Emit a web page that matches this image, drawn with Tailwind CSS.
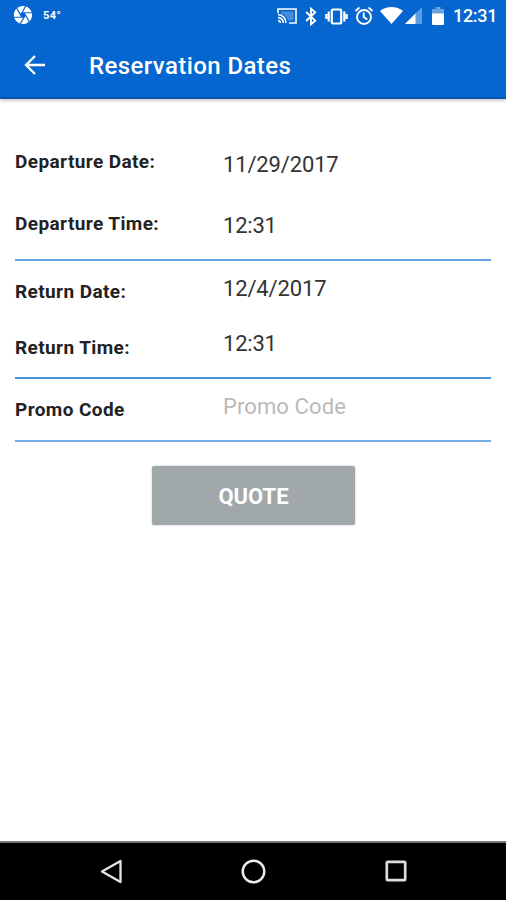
<!DOCTYPE html>
<html lang="en">
<head>
<meta charset="utf-8">
<title>Reservation Dates</title>
<script src="https://cdn.jsdelivr.net/npm/@tailwindcss/browser@4"></script>
</head>
<body class="w-[506px] h-[900px] overflow-hidden bg-white font-['Roboto',sans-serif] flex flex-col">
<header class="h-[99px] shrink-0 bg-[#0666d0] text-white border-b-2 border-[#0a55b4] shadow-[0_1px_4px_rgba(0,0,0,0.3)]">
  <div class="h-8 flex items-center pl-[13px]">
    <svg class="w-5 h-5 shrink-0 -mt-0.5" viewBox="1 1 22 22" fill="white"><path d="M9.4 10.5l4.77-8.26C13.47 2.09 12.75 2 12 2c-2.4 0-4.6.85-6.32 2.25l3.66 6.35.06-.1zM21.54 9c-.92-2.92-3.15-5.26-6-6.34L11.88 9h9.66zm.26 1h-7.49l.29.5 4.76 8.25C21 16.97 22 14.61 22 12c0-.69-.07-1.35-.2-2zM8.54 12l-3.9-6.75C3.01 7.03 2 9.39 2 12c0 .69.07 1.35.2 2h7.49l-1.15-2zm-6.08 3c.92 2.920 3.150 5.260 6 6.340L12.120 15H2.460zm11.270 0l-3.900 6.760c.7.150 1.420.240 2.170.240 2.400 0 4.600-.850 6.320-2.250l-3.660-6.350-.930 1.600z"/></svg>
    <span class="ml-[10px] w-[30px] text-[11px] leading-none font-bold tracking-[0.4px] -mt-px">54°</span>
    <svg class="ml-[204px] w-5 h-4 shrink-0" viewBox="0 0 20 16" fill="none" stroke="white" stroke-width="1.6"><path d="M1 5V1h18v14h-7M1 12.500a2.500 2.500 0 0 1 2.300 2.500M1 9.500a5.500 5.500 0 0 1 5.300 5.500M1 6.500A8.300 8.300 0 0 1 9 15"/><path d="M4 3.500h12.500v9h-5.500C9.500 8.700 7.500 6.500 4 5.300z" fill="white" fill-opacity=".25" stroke="none"/></svg>
    <svg class="ml-2 w-3 h-[19px] shrink-0" viewBox="0 0 12 19" fill="none" stroke="white" stroke-width="1.9"><path d="M1.200 5l9 8.700L6 17.300V1.700l4.200 3.600-9 8.700"/></svg>
    <svg class="ml-2 w-[23px] h-[17px] shrink-0" viewBox="0 0 23 17" fill="none" stroke="white" stroke-width="2.200"><rect x="6.800" y="1.500" width="9.400" height="14" rx="1"/><path d="M3.700 3.500v10M19.300 3.500v10M1.300 6v5M21.700 6v5"/></svg>
    <svg class="ml-[6px] w-5 h-5 shrink-0 -mt-px" viewBox="0 0 20 20" fill="none" stroke="white" stroke-width="1.900"><circle cx="10" cy="11" r="7"/><path d="M1.500 5l4-3.500M18.500 5l-4-3.500M9.700 6.500V11l3.500 2.500"/></svg>
    <svg class="ml-[6px] w-[23px] h-[17px] shrink-0 -mt-px" viewBox="0 0 23 17" fill="white"><path d="M0 4C6.500-1.300 16.500-1.300 23 4L11.500 17z"/></svg>
    <svg class="ml-[2px] w-[17px] h-[17px] shrink-0 -mt-px" viewBox="0 0 17 17" fill="white"><path d="M17 0v17H0z" fill-opacity=".35"/><path d="M10.500 6.500V17H0z"/></svg>
    <svg class="ml-[10px] w-3 h-[18px] shrink-0 -mt-px" viewBox="0 0 12 18" fill="white"><path d="M3.500 0h5v2H12v5H0V2h3.500z" fill-opacity=".4"/><path d="M0 6.500h12V17a1 1 0 0 1-1 1H1a1 1 0 0 1-1-1z"/></svg>
    <span class="ml-[9px] text-[18px] leading-none font-medium tracking-[-0.3px] whitespace-nowrap">12:31</span>
  </div>
  <div class="h-[65px] flex items-center pl-[24px]">
    <svg class="w-[22px] h-[22px]" viewBox="0 0 22 22" fill="none" stroke="white" stroke-width="2.300"><path d="M21 11H3M11 2L2 11l9 9"/></svg>
    <h1 class="ml-[43px] mt-0.5 text-[24px] leading-none font-medium tracking-[0.4px] whitespace-nowrap">Reservation Dates</h1>
  </div>
</header>
<main class="flex-1 px-[15px] text-[#222]">
  <section class="h-[162px] border-b-2 border-[#69a5df] grid grid-cols-[208px_1fr] grid-rows-[62px_62px] pt-[31px]">
    <div class="pt-[21px] text-[19px] leading-[22px] font-bold tracking-[0.4px]">Departure Date:</div>
    <div class="pt-[22px] text-[22px] leading-[26px] tracking-[-0.15px] text-[#333]">11/29/2017</div>
    <div class="pt-[21px] text-[19px] leading-[22px] font-bold tracking-[0.4px]">Departure Time:</div>
    <div class="pt-[21px] text-[22px] leading-[26px] tracking-[-0.2px] text-[#333]">12:31</div>
  </section>
  <section class="h-[118px] border-b-2 border-[#4393db] grid grid-cols-[208px_1fr] grid-rows-[55px_55px]">
    <div class="pt-[20px] text-[19px] leading-[22px] font-bold tracking-[0.4px]">Return Date:</div>
    <div class="pt-[15px] text-[22px] leading-[26px] tracking-[-0.15px] text-[#333]">12/4/2017</div>
    <div class="pt-[21px] text-[19px] leading-[22px] font-bold tracking-[0.4px]">Return Time:</div>
    <div class="pt-[15px] text-[22px] leading-[26px] tracking-[-0.2px] text-[#333]">12:31</div>
  </section>
  <section class="h-[63px] border-b-2 border-[#73abe2] grid grid-cols-[208px_1fr]">
    <div class="pt-[20px] text-[19px] leading-[22px] font-bold tracking-[0.4px]">Promo Code</div>
    <div class="pt-[15px] text-[22px] leading-[26px] tracking-[0.1px] text-[#bababa]">Promo Code</div>
  </section>
  <button class="block mt-[24px] ml-[137px] w-[203px] h-[59px] pt-0.5 rounded-[2px] bg-[#a0a8aa] text-white text-[22px] font-bold shadow-[0_0_2px_rgba(120,130,130,0.5)]">QUOTE</button>
</main>
<nav class="h-[59px] shrink-0 bg-black border-t-2 border-[#777] flex items-center pl-[100px]">
  <svg class="w-[23px] h-[25px] -mt-px" viewBox="0 0 23 25" fill="none" stroke="#e5e5e5" stroke-width="2.300" stroke-linejoin="round"><path d="M20.500 2v21L2 12.500z"/></svg>
  <svg class="ml-[118px] w-[25px] h-[25px] -mt-px" viewBox="0 0 25 25" fill="none" stroke="#eee" stroke-width="2.400"><circle cx="12.500" cy="12.500" r="10.800"/></svg>
  <svg class="ml-[119px] w-[22px] h-[22px] -mt-0.5" viewBox="0 0 22 22" fill="none" stroke="#ddd" stroke-width="2.700"><rect x="1.800" y="1.800" width="18.400" height="18.400" rx="1"/></svg>
</nav>
</body>
</html>
